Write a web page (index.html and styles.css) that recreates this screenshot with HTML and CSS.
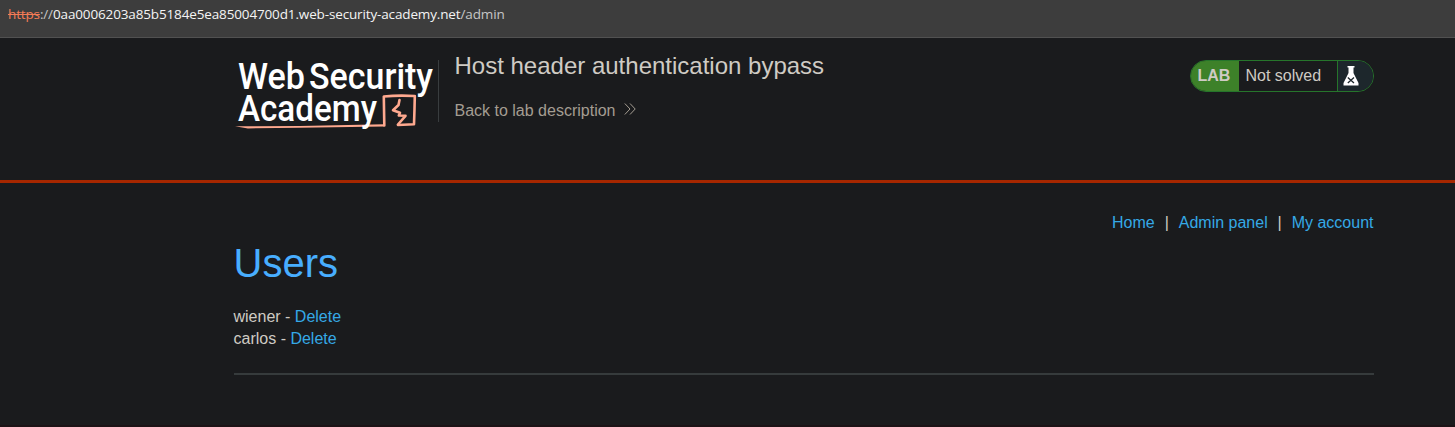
FILE: index.html
```html
<!DOCTYPE html>
<html lang="en">
<head>
<meta charset="utf-8">
<title>Host header authentication bypass</title>
<link rel="stylesheet" href="styles.css">
</head>
<body>
<div class="address-bar"><span class="scheme">https</span><span class="muted">://</span><span class="host">0aa0006203a85b5184e5ea85004700d1.web-security-academy.net</span><span class="muted path">/admin</span></div>
<header class="lab-header">
  <div class="container header-row">
    <svg class="logo" width="204" height="76" viewBox="234 56 204 76" role="img" aria-label="Web Security Academy">
      <g class="logo-line">
        <path class="fill" d="M235 126.300L300 126L384 124.300L384 126.600L300 127.800L248 128.400Z"/>
        <path d="M384.300 125.500L383.800 96.500Q398 95 414.800 96L414.500 109L414 124.300L398 125"/>
        <path d="M399.500 100L398.500 105L393 110.200L400 112.800L398.800 115.500L405.500 115.800L398 124.500"/>
      </g>
      <g class="logo-text">
        <text x="238" y="88.600" textLength="67" lengthAdjust="spacingAndGlyphs">Web</text>
        <text x="309" y="88.600" textLength="124" lengthAdjust="spacingAndGlyphs">Security</text>
        <text x="238" y="121.200" textLength="139" lengthAdjust="spacingAndGlyphs">Academy</text>
      </g>
    </svg>
    <div class="title-block">
      <h2>Host header authentication bypass</h2>
      <a class="back" href="#">Back to lab description
        <svg width="12" height="12" viewBox="0 0 12 12"><path d="M.8.5L6 6L.8 11.500M6 .5L11.200 6L6 11.500"/></svg></a>
    </div>
    <div class="status">
      <span class="status-lab">LAB</span>
      <span class="status-text">Not solved</span>
      <span class="status-icon"><svg width="16" height="20" viewBox="0 0 16 20"><path class="flask" d="M4.500 0H11.500V1.500H10.500V7L15.500 17V19.500H.5V17L5.500 7V1.500H4.500Z"/><path class="cross" d="M4.800 11.500L11 17M11 11.500L4.800 17"/></svg></span>
    </div>
  </div>
</header>
<main class="container">
  <nav class="links"><a href="#">Home</a><span>|</span><a href="#">Admin panel</a><span>|</span><a href="#">My account</a></nav>
  <h1>Users</h1>
  <div class="user">wiener - <a href="#">Delete</a></div>
  <div class="user">carlos - <a href="#">Delete</a></div>
  <hr>
</main>
</body>
</html>
```
FILE: styles.css
```css
* { box-sizing: border-box; }
body {
  margin: 0;
  height: 427px;
  overflow: hidden;
  background: #1a1b1d;
  color: #cfcbc4;
  font: 16px/22px "Liberation Sans", Arial, sans-serif;
  border-bottom: 2px solid #1c1316;
}
a { color: #35a9e6; text-decoration: none; }
.address-bar {
  height: 38px;
  padding: 4px 8px 0;
  background: #3d3d3d;
  border-bottom: 1px solid #515151;
  font: 13.5px/20px "Open Sans", "Noto Sans", sans-serif;
  letter-spacing: -0.14px;
  white-space: nowrap;
}
.scheme { color: #f47b56; text-decoration: line-through; }
.host { color: #f4f4f4; }
.muted { color: #c6c6c6; }
.container { width: 1140px; margin-left: 233.5px; }
.lab-header { height: 145px; border-bottom: 3px solid #a62700; }
.header-row { display: flex; align-items: flex-start; }
.logo { margin-top: 18px; flex: none; overflow: visible; }
.logo-text { fill: #fff; font: 500 37px Roboto, sans-serif; }
.logo-line { fill: none; stroke: #ffa98f; stroke-width: 2.6; stroke-linejoin: round; stroke-linecap: round; }
.logo-line .fill { fill: #ffa98f; stroke: none; }
.title-block {
  height: 62px;
  margin-top: 22px;
  padding-left: 16px;
  border-left: 1px solid #393d3f;
}
h2 { margin: -9px 0 0; font-size: 24px; line-height: 30px; font-weight: 400; }
.back { display: block; margin-top: 19px; color: #a49d92; }
.back svg { margin-left: 4px; vertical-align: 1px; fill: none; stroke: #a49d92; stroke-width: 1; }
.status {
  display: flex;
  width: 184px;
  height: 32px;
  margin: 22px 0 0 auto;
  border: 1px solid #26752b;
  border-radius: 16px;
  overflow: hidden;
  line-height: 30px;
}
.status-lab { width: 48px; padding-left: 7px; background: #3d8129; font-weight: 700; }
.status-text { flex: 1; padding-left: 7px; }
.status-icon { width: 36px; padding: 5px 0 0 5px; border-left: 1px solid #26752b; background: #1d272c; line-height: 0; }
.flask { fill: #fff; }
.cross { fill: none; stroke: #1d272c; stroke-width: 1.3; }
.links { display: flex; justify-content: flex-end; padding-top: 29px; }
.links span { width: 24px; text-align: center; }
h1 { margin: 4px 0 18px; color: #48aeff; font-size: 40px; line-height: 50px; font-weight: 400; }
hr { height: 2px; margin: 23px 0 0; border: 0; background: #363b3c; }
```
